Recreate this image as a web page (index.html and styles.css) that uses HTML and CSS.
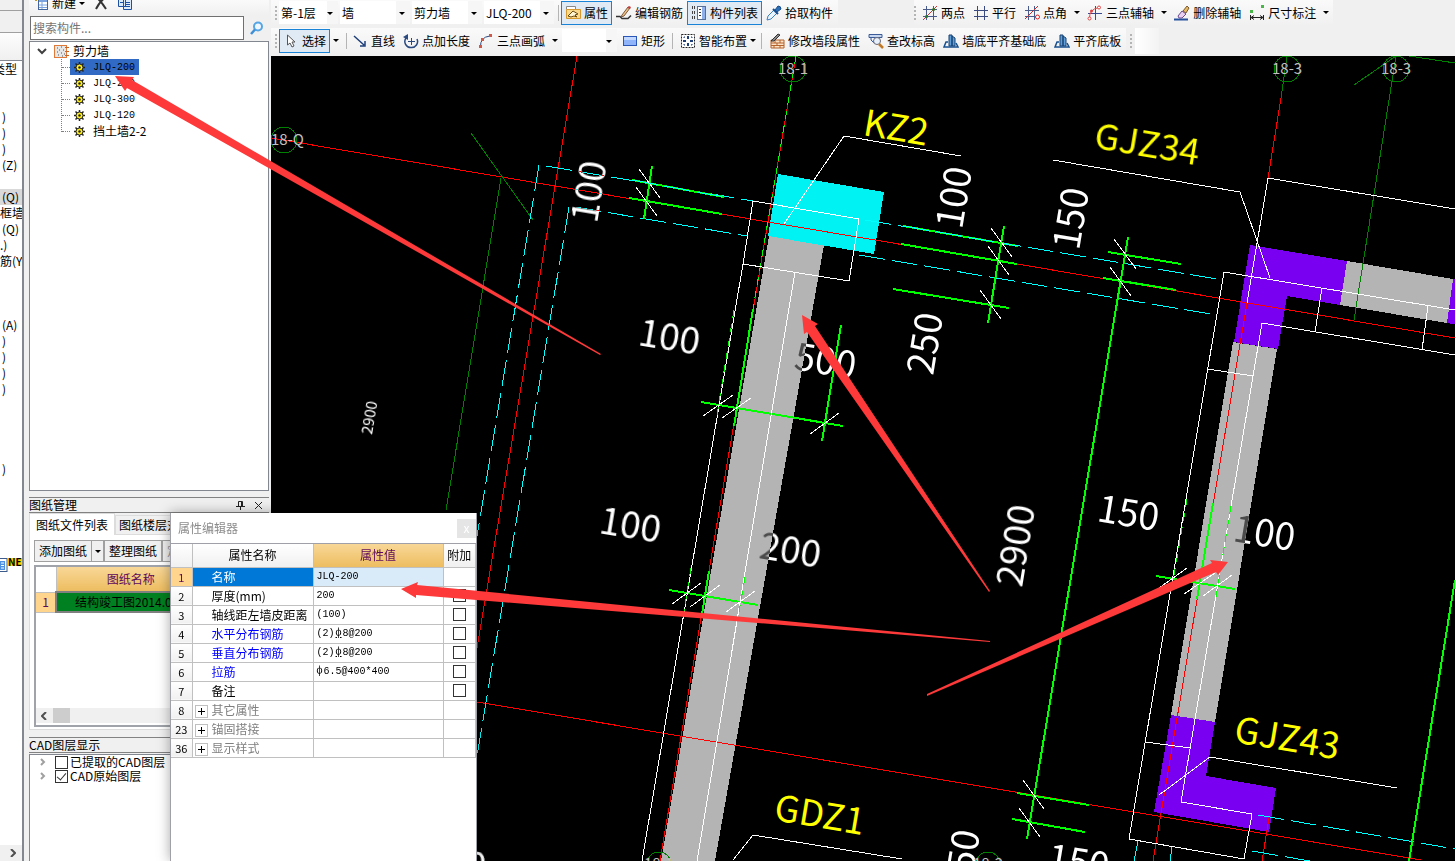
FILE: index.html
```html
<!DOCTYPE html>
<html lang="zh-CN">
<head>
    <meta charset="UTF-8">
    <meta name="viewport" content="width=device-width, initial-scale=1.0">
    <title>剪力墙 - 绘图</title>
    <link rel="stylesheet" href="styles.css">
</head>
<body>

    <!-- Module strip -->
    <nav class="modules">
        <div class="modules-top"></div>
        <div class="modules-bar"></div>
        <div class="modules-gap"></div>
        <div class="modules-head"><span>类型</span></div>
        <ul class="modules-list">
            <li></li><li></li>
            <li>)</li>
            <li>)</li>
            <li>)</li>
            <li>(Z)</li>
            <li></li>
            <li class="current">(Q)</li>
            <li class="flush">框墙</li>
            <li>(Q)</li>
            <li class="flush">.)</li>
            <li class="flush">筋(Y</li>
            <li></li><li></li><li></li>
            <li>(A)</li>
            <li>)</li>
            <li>)</li>
            <li>)</li>
            <li>)</li>
            <li></li><li></li><li></li><li></li>
            <li>)</li>
        </ul>
        <div class="modules-new">
            <svg width="8" height="14" viewBox="0 0 8 14"><rect x="-4" y=".5" width="11" height="13" fill="#fff" stroke="#3c5a8c"/><rect x="0" y="3" width="5" height="9" fill="#4d8fe0"/><path d="M1 5h3M1 7.500h3M1 10h3" stroke="#fff"/></svg>
            <b>NE</b>
        </div>
        <button class="scroll-end" type="button" aria-label="向右滚动"><svg width="6" height="8" viewBox="0 0 6 8"><path d="M1 0l4 4-4 4" fill="none" stroke="#505050" stroke-width="2"/></svg></button>
    </nav>

    <!-- Side docks -->
    <aside class="sidebar">
        <div class="tree-tools">
            <button type="button">
                <svg class="icon" viewBox="0 0 16 16"><path d="M0 3h6M3 0v6" stroke="#c99a1e" stroke-width="2"/><rect x="5.500" y="3.500" width="9" height="11" fill="#fff" stroke="#41659c"/><rect x="6" y="4" width="8" height="3" fill="#7ba3e0"/><path d="M6 10h8M6 12.500h8M9 7v7" stroke="#7ba3e0"/></svg>
                新建<i class="caret"></i>
            </button>
            <button type="button" aria-label="删除"><svg class="icon" viewBox="0 0 16 16"><path d="M3 2q5 4 10 12M13 2Q7 6 3 14" fill="none" stroke="#333" stroke-width="2"/></svg></button>
            <button type="button" aria-label="复制"><svg class="icon" viewBox="0 0 16 16"><path d="M1.500 1.500h7v10h-7zM6.500 4.500h8v10h-8z" fill="#dce9fb" stroke="#1d4fa5"/><path d="M8 7.500h5M8 9.500h5M8 11.500h5M3 4.500h3M3 7.500h3" stroke="#1d4fa5"/></svg></button>
        </div>

        <form class="search">
            <input type="text" placeholder="搜索构件..." aria-label="搜索构件">
            <button type="button" aria-label="搜索"><svg width="14" height="14" viewBox="0 0 14 14"><circle cx="8" cy="5.500" r="4" fill="#eef7ff" stroke="#55a4e4" stroke-width="2"/><path d="M5 8.500L1 13" stroke="#3f8fd8" stroke-width="2.500"/></svg></button>
        </form>

        <div class="tree">
            <div class="tree-root">
                <svg width="10" height="7" viewBox="0 0 10 7"><path d="M1 1l4 4 4-4" fill="none" stroke="#404040" stroke-width="2"/></svg>
                <svg class="wall-icon" width="15" height="13" viewBox="0 0 15 13"><rect x=".5" y=".5" width="12" height="12" fill="#e6e6e6" stroke="#e07a3a"/><path d="M3 3h1M7 2h1M5 5h1M9 5h1M3 7h1M7 8h1M10 9h1M4 10h1M8 11h1" stroke="#555"/><path d="M11 2.500h4M11 6.500h4M11 10.500h4" stroke="#d06020"/></svg>
                <span>剪力墙</span>
            </div>
            <ul class="tree-items">
                <li><span class="node selected"><svg class="gear" viewBox="0 0 11 11"><path d="M5.500 0v11M0 5.500h11M1.500 1.500l8 8M9.500 1.500l-8 8" stroke="#222" stroke-width="1.500"/><circle cx="5.500" cy="5.500" r="3.500" fill="#ffef20" stroke="#222"/><circle cx="5.500" cy="5.500" r="1.200" fill="#222"/></svg><span class="mono">JLQ-200</span></span></li>
                <li><span class="node"><svg class="gear" viewBox="0 0 11 11"><path d="M5.500 0v11M0 5.500h11M1.500 1.500l8 8M9.500 1.500l-8 8" stroke="#222" stroke-width="1.500"/><circle cx="5.500" cy="5.500" r="3.500" fill="#ffef20" stroke="#222"/><circle cx="5.500" cy="5.500" r="1.200" fill="#222"/></svg><span class="mono">JLQ-250</span></span></li>
                <li><span class="node"><svg class="gear" viewBox="0 0 11 11"><path d="M5.500 0v11M0 5.500h11M1.500 1.500l8 8M9.500 1.500l-8 8" stroke="#222" stroke-width="1.500"/><circle cx="5.500" cy="5.500" r="3.500" fill="#ffef20" stroke="#222"/><circle cx="5.500" cy="5.500" r="1.200" fill="#222"/></svg><span class="mono">JLQ-300</span></span></li>
                <li><span class="node"><svg class="gear" viewBox="0 0 11 11"><path d="M5.500 0v11M0 5.500h11M1.500 1.500l8 8M9.500 1.500l-8 8" stroke="#222" stroke-width="1.500"/><circle cx="5.500" cy="5.500" r="3.500" fill="#ffef20" stroke="#222"/><circle cx="5.500" cy="5.500" r="1.200" fill="#222"/></svg><span class="mono">JLQ-120</span></span></li>
                <li><span class="node"><svg class="gear" viewBox="0 0 11 11"><path d="M5.500 0v11M0 5.500h11M1.500 1.500l8 8M9.500 1.500l-8 8" stroke="#222" stroke-width="1.500"/><circle cx="5.500" cy="5.500" r="3.500" fill="#ffef20" stroke="#222"/><circle cx="5.500" cy="5.500" r="1.200" fill="#222"/></svg><span>挡土墙2-2</span></span></li>
            </ul>
        </div>

        <section class="dock">
            <header class="dock-title">
                <span>图纸管理</span>
                <button type="button" aria-label="固定"><svg width="9" height="9" viewBox="0 0 9 9"><path d="M2.500 5V.5h4V5M5.500 1v4M0 5.500h9M4.500 6v3" fill="none" stroke="#222"/></svg></button>
                <button type="button" aria-label="关闭"><svg width="9" height="9" viewBox="0 0 9 9"><path d="M1 1l7 7M8 1L1 8" stroke="#222"/></svg></button>
            </header>
            <div class="tabs">
                <button class="tab active" type="button">图纸文件列表</button>
                <button class="tab" type="button">图纸楼层对照表</button>
            </div>
            <div class="tab-body">
                <div class="sheet-tools">
                    <button type="button">添加图纸</button>
                    <button class="drop" type="button" aria-label="更多"><i class="caret"></i></button>
                    <button class="apart" type="button">整理图纸</button>
                    <button class="off" type="button">定位图纸</button>
                </div>
                <div class="sheet-box">
                    <table class="sheets">
                        <tr><th class="num"></th><th class="name">图纸名称</th></tr>
                        <tr><td class="num on">1</td><td class="file">结构竣工图2014.05</td></tr>
                    </table>
                    <div class="hscroll">
                        <svg width="6" height="8" viewBox="0 0 6 8"><path d="M5 0L1 4l4 4" fill="none" stroke="#505050" stroke-width="2"/></svg>
                        <div class="thumb"></div>
                    </div>
                </div>
            </div>
        </section>

        <section class="dock layers">
            <header class="dock-title"><span>CAD图层显示</span></header>
            <div class="layer-list">
                <label><svg class="fold" viewBox="0 0 6 8"><path d="M1 1l3 3-3 3" fill="none" stroke="#a0a0a0" stroke-width="2"/></svg><input type="checkbox">已提取的CAD图层</label>
                <label><svg class="fold" viewBox="0 0 6 8"><path d="M1 1l3 3-3 3" fill="none" stroke="#a0a0a0" stroke-width="2"/></svg><input type="checkbox" checked>CAD原始图层</label>
            </div>
        </section>
    </aside>

    <main class="main">
        <div class="toolbars">
            <div class="toolbar-row">
                <div class="toolbar">
                    <i class="grip"></i>
                    <span class="combo narrow"><select aria-label="楼层"><option>第-1层</option></select></span>
                    <span class="combo"><select aria-label="构件大类"><option>墙</option></select></span>
                    <span class="combo"><select aria-label="构件类型"><option>剪力墙</option></select></span>
                    <span class="combo"><select aria-label="构件"><option>JLQ-200</option></select></span>
                    <i class="sep close"></i>
                    <button class="tool pressed" type="button"><svg class="icon" viewBox="0 0 16 16"><path d="M1.500 1.500h9v3h-9z" fill="#fff" stroke="#888"/><path d="M1.500 4.500h14v9h-14z" fill="#fbd98a" stroke="#d89a2e"/><path d="M3 11l5-5 5 3-3 1 2 2-3-1-3 1z" fill="#fff5d0" stroke="#6b4a12"/></svg>属性</button>
                    <button class="tool" type="button"><svg class="icon" viewBox="0 0 16 16"><path d="M0 11.500h4l2 2h6l3-3" fill="none" stroke="#333" stroke-width="1.500"/><path d="M6 10l6-8 2 1-6 8-3 1z" fill="#f0c080" stroke="#7a5a40"/><path d="M11 3l2-2 2 1-1 2z" fill="#c04040"/></svg>编辑钢筋</button>
                    <button class="tool pressed" type="button"><svg class="icon" viewBox="0 0 16 16"><path d="M1 2.500h4M1 7.500h4M1 12.500h4" stroke="#444" stroke-width="3" stroke-dasharray="1 1"/><rect x="6.500" y="1.500" width="8" height="13" fill="#fff" stroke="#5a6f96"/><path d="M8 4.500h2M8 7.500h2M8 10.500h2" stroke="#333"/><rect x="11" y="2" width="3" height="12" fill="#8fb0e8"/></svg>构件列表</button>
                    <button class="tool" type="button"><svg class="icon" viewBox="0 0 16 16"><path d="M1 15l1-4 6-6 3 3-6 6z" fill="#e8f4ff" stroke="#3c7fc0"/><path d="M7 4l5 5" stroke="#174d8c" stroke-width="2"/><path d="M9 5l3-4q3 0 3 3l-4 3z" fill="#2d6fb5" stroke="#174d8c"/></svg>拾取构件</button>
                </div>
                <div class="toolbar second">
                    <i class="grip"></i>
                    <button class="tool" type="button"><svg class="icon" viewBox="0 0 16 16"><path d="M4.500 1v14M11.500 1v14M1 4.500h14M1 11.500h14" stroke="#4a5a8a"/><path d="M1 15L15 1" stroke="#c33"/><circle cx="4.500" cy="11.500" r="1.500" fill="#2a7a2a"/><circle cx="11.500" cy="4.500" r="1.500" fill="#2a7a2a"/></svg>两点</button>
                    <button class="tool" type="button"><svg class="icon" viewBox="0 0 16 16"><path d="M4.500 1v14M11.500 1v14M1 5.500h14M1 11.500h14" stroke="#3a4a80"/></svg>平行</button>
                    <button class="tool" type="button"><svg class="icon" viewBox="0 0 16 16"><path d="M4.500 1v14M10.500 1v14M1 5.500h14M1 11.500h14" stroke="#4a5a8a"/><path d="M1 14L14 1" stroke="#d22"/><circle cx="13.500" cy="12" r="2" fill="#fff" stroke="#d22"/></svg>点角</button>
                    <button class="tool-drop" type="button" aria-label="点角选项"><i class="caret"></i></button>
                    <button class="tool" type="button"><svg class="icon" viewBox="0 0 16 16"><path d="M8.500 1v14M1 8.500h14" stroke="#3a4a90"/><path d="M2.500 14Q2 4 12 2.500" fill="none" stroke="#d44"/><circle cx="2.500" cy="13.500" r="1.500" fill="#fff" stroke="#d44"/><circle cx="12" cy="2.500" r="1.500" fill="#fff" stroke="#d44"/><circle cx="4.500" cy="6" r="1.500" fill="#d44"/></svg>三点辅轴</button>
                    <button class="tool-drop" type="button" aria-label="三点辅轴选项"><i class="caret"></i></button>
                    <button class="tool" type="button"><svg class="icon" viewBox="0 0 16 16"><path d="M0 14.500h14" stroke="#27509c" stroke-width="2"/><path d="M4 11l4-5 4 3-4 4H5z" fill="#e8d0f0" stroke="#6b4a90"/><path d="M9 6l4-5 2 2-3 5z" fill="#e8b860" stroke="#7a5a30"/></svg>删除辅轴</button>
                    <button class="tool" type="button"><svg class="icon" viewBox="0 0 16 16"><path d="M1 5h3v3H1zM12 0h3v3h-3z" fill="#49b649"/><path d="M1.500 10v5M14.500 10v5M2 12.500h12M5 10.500l-3 2 3 2M11 10.500l3 2-3 2" fill="none" stroke="#222"/></svg>尺寸标注</button>
                    <button class="tool-drop" type="button" aria-label="尺寸标注选项"><i class="caret"></i></button>
                </div>
            </div>
            <div class="toolbar-row">
                <div class="toolbar">
                    <i class="grip"></i>
                    <button class="tool pressed" type="button"><svg class="icon" viewBox="0 0 16 16"><path d="M4.500 2v10l2.500-2 2 4 2-1-2-4h3z" fill="#fff" stroke="#555"/></svg>选择</button>
                    <button class="tool-drop" type="button" aria-label="选择选项"><i class="caret"></i></button>
                    <i class="sep tight"></i>
                    <button class="tool" type="button"><svg class="icon" viewBox="0 0 16 16"><path d="M2 3l10 9M13 8v5H8" fill="none" stroke="#1f3f7a" stroke-width="1.500"/></svg>直线</button>
                    <button class="tool" type="button"><svg class="icon" viewBox="0 0 16 16"><path d="M3 5a6 6 0 0 0 5 9.500 6 6 0 0 0 6-8.500" fill="none" stroke="#2a4a80" stroke-width="1.500"/><path d="M5 7V1L0 4z" fill="#2a4a80"/><path d="M8.500 5v7M5 8.500h7" stroke="#2a4a80"/></svg>点加长度</button>
                    <button class="tool" type="button"><svg class="icon" viewBox="0 0 16 16"><path d="M2.500 14Q2 4 12 3" fill="none" stroke="#2a4a80"/><path d="M1 12h3v3H1zM11 1h3v3h-3zM3 5h3v3H3z" fill="#d05a4a"/></svg>三点画弧</button>
                    <button class="tool-drop" type="button" aria-label="三点画弧选项"><i class="caret"></i></button>
                    <span class="combo short"><select aria-label="画弧方式"><option></option></select></span>
                    <button class="tool" type="button"><svg class="icon" viewBox="0 0 16 16"><rect x="1.500" y="3.500" width="13" height="9" fill="#8fb4fa" stroke="#2a56b8"/><path d="M2 4h12v3H2z" fill="#c3d8ff"/></svg>矩形</button>
                    <i class="sep"></i>
                    <button class="tool snug" type="button"><svg class="icon" viewBox="0 0 16 16"><rect x="1.500" y="1.500" width="13" height="13" fill="#fff" stroke="#222" stroke-dasharray="2 1"/><path d="M8 3v3M8 10v3M3 8h3M10 8h3" stroke="#1f3f7a" stroke-width="2"/><path d="M4 5V4h1M11 4h1v1M4 11v1h1M11 12h1v-1" fill="none" stroke="#1f3f7a"/></svg>智能布置<i class="caret"></i></button>
                    <i class="sep"></i>
                    <button class="tool" type="button"><svg class="icon" viewBox="0 0 16 16"><path d="M2 7h13v8H2z" fill="#fbe3c8" stroke="#b5622c"/><path d="M2 10h13M2 12.500h13M6 7v3M11 7v3M8 10v2.500M5 12.500V15M11 12.500V15" stroke="#b5622c"/><path d="M2 8l7-7 2 1-6 6z" fill="#888" stroke="#333"/></svg>修改墙段属性</button>
                    <button class="tool" type="button"><svg class="icon" viewBox="0 0 16 16"><path d="M1 1.500h13v3H1zM3 5v2l3 3" fill="#c6d6f0" stroke="#3a5a98"/><circle cx="9" cy="8" r="3.500" fill="#e8f1fb" stroke="#667"/><path d="M11 11l4 4" stroke="#c07828" stroke-width="2.500"/></svg>查改标高</button>
                    <button class="tool" type="button"><svg class="icon" viewBox="0 0 16 16"><path d="M6 2h3v11H6zM9 3l3 2v8H9z" fill="#5f9fdc" stroke="#17406f"/><path d="M5 9H3l-2 5h14l-2-4" fill="none" stroke="#17508f" stroke-width="1.500"/></svg>墙底平齐基础底</button>
                    <button class="tool" type="button"><svg class="icon" viewBox="0 0 16 16"><path d="M6 2h3v11H6zM9 3l3 2v8H9z" fill="#5f9fdc" stroke="#17406f"/><path d="M5 9H3l-2 5h14l-2-4" fill="none" stroke="#17508f" stroke-width="1.500"/></svg>平齐底板</button>
                </div>
                <div class="toolbar stub"><i class="grip"></i></div>
            </div>
        </div>

        <!-- Drawing area, coordinates are window coordinates shifted by the docks -->
        <div class="canvas">
            <svg class="drawing" width="100%" height="100%">
                <g transform="translate(-271 -56)">
                    <!-- columns and walls -->
                    <g class="solid">
                        <polygon class="wall" points="769,236 824,245 715,861 661,861"/>
                        <polygon class="wall" points="1347,261 1453,279 1447,323 1340,305"/>
                        <polygon class="wall" points="1233,342 1277,349 1215,722 1171,715"/>
                        <polygon class="column" points="778,174 884,192 874,254 768,236"/>
                        <polygon class="corner" points="1250,245 1347,261 1340,305 1287,296 1278,349 1234,342"/>
                        <polygon class="corner" points="1453,279 1500,287 1500,332 1447,323"/>
                        <polygon class="corner" points="1171,715 1215,722 1206,776 1276,788 1269,832 1154,812"/>
                    </g>

                    <!-- grid axes -->
                    <g class="line red">
                        <path d="M271 138L1455 338M477 702L1421 860M577 56L477 648M796 56L660 861"/>
                        <path d="M1281 98L1268 178M1247 303L1153 861M1269 818L1262 861"/>
                    </g>
                    <g class="line dark">
                        <path d="M471 133L533 220M501 178L446 510M1287 56L1281 98M1396 56L1354 320M1354 85L1396 56M1409 56L1455 63"/>
                        <circle cx="284" cy="140" r="13"/>
                        <circle cx="793" cy="69" r="13"/>
                        <circle cx="1287" cy="69" r="13"/>
                        <circle cx="1396" cy="69" r="13"/>
                        <circle cx="659" cy="864" r="12"/>
                        <circle cx="988" cy="864" r="12"/>
                    </g>
                    <path class="line lime-dash" d="M796 56L753 309"/>

                    <!-- beam edges -->
                    <g class="line cyan">
                        <path d="M539 165L477 536"/>
                        <path d="M569 207L477 756"/>
                        <path d="M546 166L753 201"/>
                        <path d="M575 207L747 236"/>
                        <path d="M865 220L1223 280"/>
                        <path d="M859 255L1217 315"/>
                        <path d="M1258 815L1455 849"/>
                        <path d="M1252 851L1310 861"/>
                        <path d="M1138 841L1134 861"/>
                        <path d="M1172 847L1170 861"/>
                    </g>

                    <!-- dimension lines -->
                    <g class="line lime">
                        <path d="M652 166L644 219M632 180L724 197M629 198L722 214"/>
                        <path d="M753 309L734 426M701 402L843 426M841 325L822 441"/>
                        <path d="M903 226L1018 246M901 244L1017 264M893 289L1009 308M1004 226L988 323"/>
                        <path d="M1128 237L1027 839M1108 252L1181 264M1103 278L1176 290"/>
                        <path d="M669 590L758 605M709 571L702 614"/>
                        <path d="M1156 576L1235 589M1213 503L1197 599"/>
                        <path d="M1017 793L1089 805M1012 819L1085 832M1455 580L1409 861"/>
                    </g>
                    <g class="line cyan">
                        <path d="M632 180L724 197"/>
                        <path d="M903 226L1018 246"/>
                    </g>

                    <!-- outlines from the source drawing -->
                    <g class="line white">
                        <path d="M753 201L859 219L849 281L743 264zM743 264L642 861M795 272L697 861"/>
                        <path d="M784 224L844 136L961 156M1053 160L1240 192L1270 278M733 860L753 835L902 859M1159 795L1210 757L1397 788"/>
                        <path d="M1247 303L1268 178L1455 209"/>
                        <path d="M1455 310L1224 272L1129 839L1244 859L1252 814L1181 802L1262 323L1455 355"/>
                        <path d="M1208 369L1253 376M1145 742L1190 748M1322 288L1315 332M1428 306L1422 350"/>
                    </g>
                    <path class="line lime-dash" d="M734 310L716 421M691 568L684 611M745 577L738 618M1187 499L1171 593M1231 506L1215 603"/>
                    <g class="line white">
                        <path d="M639 169L660 198M636 187L657 216M703 416L733 395M722 418L751 398M810 434L839 413"/>
                        <path d="M991 228L1012 257M988 246L1009 275M980 290L1001 319M1114 239L1136 269M1110 267L1131 296"/>
                        <path d="M672 604L701 583M690 607L720 585M726 612L755 591"/>
                        <path d="M1159 588L1187 568M1184 594L1215 573M1203 596L1232 575M1023 780L1044 809M1019 808L1040 837"/>
                    </g>

                    <g class="axis-name">
                        <text x="271" y="145">18-Q</text>
                        <text x="778" y="74">18-1</text>
                        <text x="1272" y="74">18-3</text>
                        <text x="1381" y="74">18-3</text>
                        <text x="644" y="869">18-1</text>
                        <text x="973" y="869">18-2</text>
                    </g>

                    <g class="dim">
                        <text transform="translate(637 345) rotate(9.500)">100</text>
                        <text transform="translate(793 369) rotate(9.500)">500</text>
                        <text transform="translate(598 533) rotate(9.500)">100</text>
                        <text transform="translate(758 558) rotate(9.500)">200</text>
                        <text transform="translate(1096 521) rotate(9.500)">150</text>
                        <text transform="translate(1232 541) rotate(9.500)">100</text>
                        <text transform="translate(1046 870) rotate(9.500)">150</text>
                        <text transform="translate(423 870) rotate(9.500)">100</text>
                        <text transform="translate(597 224) rotate(-80.500)">100</text>
                        <text transform="translate(962 230) rotate(-80.500)">100</text>
                        <text transform="translate(933 376) rotate(-80.500)">250</text>
                        <text transform="translate(1079 251) rotate(-80.500)">150</text>
                        <text transform="translate(1022 588) rotate(-80.500)">2900</text>
                        <text transform="translate(970 893) rotate(-80.500)">150</text>
                        <text class="small" transform="translate(372 435) rotate(-80.500)">2900</text>
                    </g>

                    <g class="mark">
                        <text transform="translate(862 135) rotate(9.500)">KZ2</text>
                        <text transform="translate(1093 148) rotate(9.500)">GJZ34</text>
                        <text transform="translate(1233 742) rotate(9.500)">GJZ43</text>
                        <text transform="translate(773 820) rotate(9.500)">GDZ1</text>
                    </g>
                </g>
            </svg>
        </div>
    </main>

    <!-- Floating property editor -->
    <section class="editor">
        <header class="editor-title">
            <span>属性编辑器</span>
            <button type="button" aria-label="关闭">x</button>
        </header>
        <table class="props">
            <colgroup><col class="c-num"><col class="c-name"><col class="c-value"><col class="c-extra"></colgroup>
            <tr><th></th><th>属性名称</th><th class="hot">属性值</th><th>附加</th></tr>
            <tr class="active"><td>1</td><td>名称</td><td class="mono">JLQ-200</td><td></td></tr>
            <tr><td>2</td><td>厚度(mm)</td><td class="mono">200</td><td><input type="checkbox" aria-label="厚度附加"></td></tr>
            <tr><td>3</td><td>轴线距左墙皮距离</td><td class="mono">(100)</td><td><input type="checkbox" aria-label="轴线距左墙皮距离附加"></td></tr>
            <tr class="bar"><td>4</td><td>水平分布钢筋</td><td class="mono">(2)<u>ф</u>8@200</td><td><input type="checkbox" aria-label="水平分布钢筋附加"></td></tr>
            <tr class="bar"><td>5</td><td>垂直分布钢筋</td><td class="mono">(2)<u>ф</u>8@200</td><td><input type="checkbox" aria-label="垂直分布钢筋附加"></td></tr>
            <tr class="bar"><td>6</td><td>拉筋</td><td class="mono"><i>ф</i>6.5@400*400</td><td><input type="checkbox" aria-label="拉筋附加"></td></tr>
            <tr><td>7</td><td>备注</td><td></td><td><input type="checkbox" aria-label="备注附加"></td></tr>
            <tr class="group"><td>8</td><td><button type="button" aria-label="展开"></button>其它属性</td><td></td><td></td></tr>
            <tr class="group"><td>23</td><td><button type="button" aria-label="展开"></button>锚固搭接</td><td></td><td></td></tr>
            <tr class="group"><td>36</td><td><button type="button" aria-label="展开"></button>显示样式</td><td></td><td></td></tr>
        </table>
    </section>

    <!-- Callout arrows -->
    <svg class="callouts" width="100%" height="100%">
        <polygon points="115,76 134,77 132,80 601,354 600,355 127,88 125,91"/>
        <polygon points="802,315 818,324 815,326 990,591 989,592 807,332 804,334"/>
        <polygon points="401,589 418,582 417,585 990,641 990,642 416,595 416,598"/>
        <polygon points="1228,562 1210,560 1212,563 927,694 927,696 1216,572 1218,575"/>
    </svg>

</body>
</html>
```

FILE: styles.css
```css
* {
    box-sizing: border-box;
}

body {
    margin: 0;
    height: 100vh;
    display: flex;
    overflow: hidden;
    position: relative;
    background: #f0f0f0;
    color: #000;
    font-family: "Noto Sans CJK SC", sans-serif;
    font-size: 12px;
    line-height: 16px;
}

button, input, select {
    font: inherit;
    color: inherit;
    margin: 0;
    padding: 0;
    border: none;
    border-radius: 0;
    background: none;
}

ul {
    list-style: none;
    margin: 0;
    padding: 0;
}

table {
    border-collapse: collapse;
    table-layout: fixed;
}

svg {
    flex: none;
    display: block;
}

input[type="checkbox"] {
    appearance: none;
    flex: none;
    width: 13px;
    height: 13px;
    border: 1px solid #333;
    background: #fff;
}

.mono {
    font-family: "Liberation Mono", "Noto Sans CJK SC", monospace;
    font-size: 10px;
}

.icon {
    width: 16px;
    height: 16px;
}

.caret {
    width: 0;
    height: 0;
    border: 3px solid transparent;
    border-top-color: #000;
    border-bottom: none;
}

/* Module strip */
.modules {
    flex: none;
    width: 24px;
    display: flex;
    flex-direction: column;
    overflow: hidden;
    border-right: 2px solid #828790;
    background: #fff;
}

.modules-top,
.modules-bar {
    flex: none;
    height: 11px;
    background: #f0f0f0;
    border-bottom: 1px solid #a0a0a0;
}

.modules-bar {
    height: 22px;
}

.modules-gap {
    flex: none;
    height: 28px;
    background: linear-gradient(#fdfdfd, #f0f0f0);
    border-bottom: 1px solid #828790;
}

.modules-head {
    flex: none;
    height: 16px;
    padding-right: 5px;
    display: flex;
    align-items: center;
    justify-content: flex-end;
    white-space: nowrap;
}

.modules-list {
    flex: 1;
    overflow: hidden;
}

.modules-list li {
    height: 16px;
    padding-left: 2px;
    white-space: nowrap;
}

.modules-list .flush {
    padding-left: 0;
}

.modules-list .current {
    background: #d9d9d9;
}

.modules-new {
    flex: none;
    height: 287px;
    display: flex;
    align-items: flex-start;
    font-size: 10px;
    line-height: 8px;
}

.modules-new b {
    background: #ffd400;
}

.scroll-end {
    flex: none;
    height: 16px;
    padding-left: 10px;
    background: #f0f0f0;
}

/* Side docks */
.sidebar {
    flex: none;
    width: 247px;
    padding: 0 2px 0 5px;
    display: flex;
    flex-direction: column;
}

.tree-tools {
    height: 15px;
    padding-left: 4px;
    display: flex;
    align-items: flex-end;
    gap: 8px;
    background: linear-gradient(#fafafa, #f0f0f0);
    overflow: hidden;
}

.tree-tools button {
    display: flex;
    align-items: center;
    gap: 3px;
    height: 24px;
}

.search {
    flex: none;
    height: 26px;
    display: flex;
}

.search input {
    flex: 1;
    min-width: 0;
    margin: 1px 0 1px 1px;
    border: 1px solid #707070;
    background: #fff;
    padding: 0 2px;
}

.search input::placeholder {
    color: #757575;
}

.search button {
    width: 25px;
    display: flex;
    align-items: center;
    justify-content: center;
}

.tree {
    flex: 1;
    min-height: 140px;
    border: 1px solid #828790;
    background: #fff;
    padding: 1px 0 0 7px;
}

.tree-root {
    height: 16px;
    display: flex;
    align-items: center;
    gap: 7px;
}

.tree-root span {
    margin-left: -3px;
}

.tree-items {
    margin-left: 24px;
    height: 73px;
    border-left: 1px dotted #808080;
}

.tree-items li {
    height: 16px;
    display: flex;
    align-items: center;
}

.tree-items li::before {
    content: "";
    width: 8px;
    border-top: 1px dotted #808080;
}

.node {
    height: 16px;
    padding: 0 4px;
    display: flex;
    align-items: center;
    gap: 8px;
}

.node .mono {
    padding-top: 2px;
}

.node.selected {
    background: #316ac5;
}

.gear {
    width: 11px;
    height: 11px;
}

.dock {
    margin-top: 6px;
}

.dock-title {
    height: 16px;
    border-top: 1px solid #828282;
    border-bottom: 1px solid #828282;
    display: flex;
    align-items: center;
    gap: 9px;
    padding-right: 6px;
    line-height: 14px;
}

.dock-title span {
    flex: 1;
}

.tabs {
    display: flex;
    align-items: flex-end;
    height: 22px;
    overflow: hidden;
}

.tab {
    flex: none;
    height: 20px;
    padding: 0 3px;
    border: 1px solid #dcdcdc;
}

.tab.active {
    height: 22px;
    padding: 0 6px;
    border-bottom: none;
    background: #fff;
}

.tab-body {
    border: 1px solid #dcdcdc;
    border-top: none;
    background: #fff;
    padding: 5px 4px 2px;
}

.sheet-tools {
    display: flex;
    overflow: hidden;
    height: 22px;
}

.sheet-tools button {
    flex: none;
    width: 58px;
    border: 1px solid #a0a0a0;
    background: #f0f0f0;
}

.sheet-tools .drop {
    width: 12px;
    display: flex;
    align-items: center;
    justify-content: center;
    border-left: none;
}

.sheet-tools .off {
    color: #9a9a9a;
}

.sheet-box {
    margin-top: 3px;
    height: 162px;
    border: 2px solid #a0a4aa;
    display: flex;
    flex-direction: column;
    justify-content: space-between;
    padding-bottom: 2px;
}

.sheets {
    width: 100%;
}

.sheets th {
    height: 25px;
    padding: 0;
    font-weight: normal;
}

.sheets .num {
    width: 20px;
    border-right: 1px solid #c0c0c0;
    border-bottom: 1px solid #c0c0c0;
    text-align: center;
    color: #5c0a5c;
}

.sheets .num.on {
    background: #ffd48c;
}

.sheets .name {
    background: linear-gradient(#f8d797, #edbd60);
    color: #5c0a5c;
    padding-right: 56px;
}

.sheets .file {
    height: 20px;
    padding: 0 0 0 18px;
    border: 2px solid #808080;
    background: #008020;
    line-height: 14px;
    white-space: nowrap;
}

.hscroll {
    height: 15px;
    background: #f0f0f0;
    display: flex;
    align-items: center;
    gap: 6px;
    padding-left: 5px;
}

.hscroll .thumb {
    width: 17px;
    height: 15px;
    background: #cdcdcd;
}

.layers {
    flex: none;
    margin-top: 7px;
}

.layer-list {
    height: 107px;
    margin-top: 1px;
    border: 1px solid #828790;
    border-bottom: none;
    background: #fff;
    padding-left: 10px;
}

.layer-list label {
    display: flex;
    align-items: center;
    height: 14px;
}

.layer-list input {
    position: relative;
    margin: 0 2px 0 9px;
}

.layer-list input:checked::after {
    content: "";
    position: absolute;
    left: 3px;
    top: 0;
    width: 4px;
    height: 8px;
    border: solid #333;
    border-width: 0 1px 1px 0;
    transform: rotate(40deg);
}

.fold {
    width: 6px;
    height: 8px;
}

/* Toolbars */
.main {
    flex: 1;
    min-width: 0;
    display: flex;
    flex-direction: column;
}

.toolbars {
    flex: none;
    white-space: nowrap;
}

.toolbar-row {
    height: 28px;
    display: flex;
    gap: 76px;
}

.toolbar-row + .toolbar-row {
    gap: 3px;
}

.toolbar {
    flex: none;
    height: 26px;
    padding: 1px 1px 2px 4px;
    display: flex;
    align-items: center;
    background: linear-gradient(#fafafa, #f0f0f0);
}

.toolbar.second {
    padding-left: 0;
}

.toolbar.stub {
    width: 30px;
    padding-left: 1px;
    background: linear-gradient(90deg, #f0f0f0 6px, #fff 6px, #f3f3f3);
}

.grip {
    width: 2px;
    height: 14px;
    margin-right: 2px;
    background: repeating-linear-gradient(#b4b4b4 0 2px, transparent 2px 4px);
}

.combo {
    position: relative;
    width: 70px;
    height: 23px;
    margin-right: 2px;
    background: linear-gradient(90deg, #fff 56px, #f6f6f6 56px);
}

.combo.narrow {
    width: 59px;
    background: linear-gradient(90deg, #fff 48px, #f6f6f6 48px);
}

.combo.short {
    width: 55px;
    margin: 0 1px;
    background: linear-gradient(90deg, #fff 44px, #f6f6f6 44px);
}

.combo select {
    appearance: none;
    width: 100%;
    height: 100%;
    padding: 0 0 0 2px;
    outline: none;
}

.combo::after {
    content: "";
    position: absolute;
    right: 5px;
    top: 11px;
    border: 3px solid transparent;
    border-top-color: #000;
    border-bottom: none;
}

.sep {
    width: 1px;
    height: 16px;
    margin: 0 3px;
    background: #b4b4b4;
}

.sep.tight {
    margin: 0 1px 0 4px;
}

.sep.close {
    margin: 0 2px;
}

.tool {
    height: 24px;
    padding: 0 3px;
    border: 1px solid transparent;
    display: flex;
    align-items: center;
    gap: 3px;
}

.tool.pressed {
    border-color: #1883d7;
    background: #dfeaf5;
}

.tool.snug {
    padding-right: 1px;
}

.tool-drop {
    width: 12px;
    height: 24px;
    display: flex;
    align-items: center;
    justify-content: center;
}

/* Drawing area */
.canvas {
    flex: 1;
    min-height: 0;
    background: #000;
    overflow: hidden;
}

.line {
    fill: none;
    stroke-width: 1;
    shape-rendering: crispEdges;
}

.solid {
    shape-rendering: crispEdges;
}

.wall { fill: #b4b4b4; }
.column { fill: #00f2f2; }
.corner { fill: #7a00f2; }

.red { stroke: #f00; }
.dark { stroke: #008000; }
.white { stroke: #fff; }

.cyan {
    stroke: #0ff;
    stroke-dasharray: 26 7;
}

.lime {
    stroke: #0f0;
    stroke-width: 2;
}

.lime-dash {
    stroke: #0f0;
    stroke-dasharray: 8 6;
}

.axis-name {
    fill: #c0c0c0;
    font-size: 15px;
}

/* dimension figures invert over the walls */
.dim {
    fill: #fff;
    font-size: 37px;
    mix-blend-mode: difference;
}

.dim .small {
    font-size: 15px;
}

.mark {
    fill: #ff0;
    font-size: 36px;
}

/* Property editor */
.editor {
    position: absolute;
    left: 170px;
    top: 513px;
    bottom: 0;
    width: 307px;
    background: #fff;
    border-right: 1px solid #a0a0a8;
    border-left: 1px solid #a0a0a8;
    box-shadow: 0 0 12px rgba(0, 0, 0, 0.35);
}

.editor-title {
    height: 31px;
    padding: 0 0 0 7px;
    display: flex;
    align-items: center;
    justify-content: space-between;
    border-bottom: 1px solid #a0a0a8;
    color: #8c8c8c;
}

.editor-title button {
    width: 19px;
    height: 19px;
    background: #e5e5e5;
    color: #fff;
    line-height: 16px;
}

.props {
    width: 305px;
}

.c-num { width: 21px; }
.c-name { width: 121px; }
.c-value { width: 130px; }

.props th,
.props td {
    height: 19px;
    padding: 0;
    border-right: 1px solid #c0c0c0;
    border-bottom: 1px solid #c0c0c0;
    font-weight: normal;
    line-height: 16px;
    white-space: nowrap;
}

.props th {
    height: 23px;
    background: linear-gradient(#fff, #f0f0f0);
}

.props .hot {
    background: linear-gradient(#f8d797, #edbd60);
    color: #5c0a5c;
}

.props td:first-child {
    text-align: center;
    background: linear-gradient(#fff, #f0f0f0);
    font-size: 11px;
}

.props td:nth-child(2) {
    padding-left: 19px;
}

.props td:nth-child(3) {
    padding-left: 3px;
}

.props td u {
    margin: 0 1px;
}

.props td i {
    margin-right: 1px;
    font-style: normal;
}

.props td:last-child {
    text-align: center;
}

.props td input {
    display: block;
    margin: 0 auto;
}

.props .active td:first-child {
    background: #ffd48c;
    color: #5c0a5c;
}

.props .active td:nth-child(2) {
    background: #0078d7;
    color: #fff;
}

.props .active td:nth-child(3) {
    background: #d9eaf9;
}

.props .bar td:nth-child(2) {
    color: #00f;
}

.props .group td:nth-child(2) {
    color: #808080;
    padding-left: 2px;
}

.props .group button {
    width: 13px;
    height: 13px;
    margin-right: 4px;
    border: 1px solid #c0c0c0;
    background:
        linear-gradient(#000, #000) center / 7px 1px no-repeat,
        linear-gradient(#000, #000) center / 1px 7px no-repeat;
    vertical-align: text-bottom;
}

/* Callout arrows */
.callouts {
    position: absolute;
    left: 0;
    top: 0;
    pointer-events: none;
    fill: #fd3939;
}
```
